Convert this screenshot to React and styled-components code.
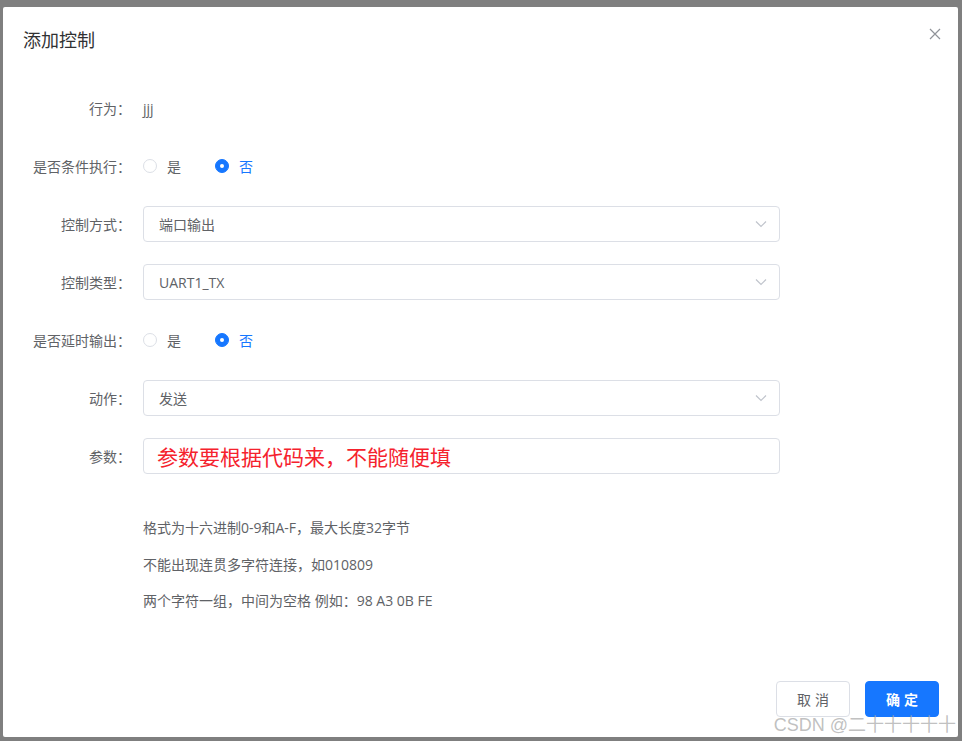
import React from 'react'
import styled, { createGlobalStyle } from 'styled-components'

const GlobalStyle = createGlobalStyle`
  * { box-sizing: border-box; }
  html, body { margin: 0; padding: 0; }
  body {
    font-family: "Open Sans", "Noto Sans CJK SC", sans-serif;
    background: #7f7f7f;
  }
`

const Page = styled.div`
  width: 962px;
  height: 741px;
  padding: 7px 4px 4px 3px;
  background: #7f7f7f;
  overflow: hidden;
`

const Dialog = styled.div`
  position: relative;
  width: 955px;
  height: 730px;
  background: #fff;
  border-radius: 2px;
  display: flex;
  flex-direction: column;
`

const Header = styled.div`
  display: flex;
  align-items: center;
  justify-content: space-between;
  padding: 20px 20px 10px;
`

const Title = styled.span`
  font-family: "Noto Sans CJK SC", sans-serif;
  font-size: 18px;
  line-height: 24px;
  color: #303133;
`

const Close = styled.button`
  border: none;
  background: none;
  padding: 0;
  margin-top: -10px;
  margin-right: -4px;
  cursor: pointer;
  display: flex;
`

const Body = styled.div`
  flex: 1;
  padding: 29px 20px 0;
`

const Row = styled.div`
  display: flex;
  align-items: center;
  height: 36px;
  margin-bottom: 22px;
`

const Label = styled.label`
  width: 120px;
  padding-right: 12px;
  text-align: right;
  font-size: 14px;
  color: #606266;
  white-space: nowrap;
`

const Field = styled.div`
  width: 637px;
  display: flex;
  align-items: center;
  font-size: 14px;
  color: #606266;
`

const Box = styled.div`
  width: 100%;
  height: 36px;
  border: 1px solid #dcdfe6;
  border-radius: 4px;
  display: flex;
  align-items: center;
  justify-content: space-between;
  padding: 0 11px 0 ${p => (p.$big ? '13px' : '15px')};
  font-family: ${p => (p.$big ? '"Noto Sans CJK SC", sans-serif' : 'inherit')};
  font-size: ${p => (p.$big ? '21px' : '14px')};
  color: ${p => (p.$big ? '#f5222d' : '#606266')};
`

const RadioItem = styled.label`
  display: flex;
  align-items: center;
  margin-right: 34px;
  font-size: 14px;
  color: ${p => (p.$checked ? '#1677ff' : '#606266')};
`

const Dot = styled.span`
  width: 14px;
  height: 14px;
  border-radius: 50%;
  margin-right: 10px;
  border: 1px solid ${p => (p.$checked ? '#1677ff' : '#dcdfe6')};
  background: ${p => (p.$checked ? '#1677ff' : '#fff')};
  display: flex;
  align-items: center;
  justify-content: center;
  &::after {
    content: '';
    width: 4px;
    height: 4px;
    border-radius: 50%;
    background: #fff;
    display: ${p => (p.$checked ? 'block' : 'none')};
  }
`

const Hints = styled.div`
  padding: 14px 0 0 120px;
`

const Hint = styled.p`
  margin: 0;
  font-size: 14px;
  line-height: 36.5px;
  color: #606266;
`

const Footer = styled.div`
  display: flex;
  justify-content: flex-end;
  gap: 15px;
  padding: 10px 19px 20px;
`

const Button = styled.button`
  width: 74px;
  height: 36px;
  border-radius: 4px;
  font-family: "Noto Sans CJK SC", sans-serif;
  font-size: 14px;
  letter-spacing: 4px;
  text-indent: 4px;
  border: 1px solid ${p => (p.$primary ? '#1677ff' : '#dcdfe6')};
  background: ${p => (p.$primary ? '#1677ff' : '#fff')};
  color: ${p => (p.$primary ? '#fff' : '#606266')};
  font-weight: ${p => (p.$primary ? 600 : 400)};
`

const Watermark = styled.span`
  position: absolute;
  right: 2px;
  bottom: 1px;
  font-family: "Liberation Sans", "Noto Sans CJK SC", sans-serif;
  font-size: 18px;
  color: rgba(165, 165, 165, 0.7);
  pointer-events: none;
`

const Chevron = () => (
  <svg width="14" height="14" viewBox="0 0 14 14" fill="none">
    <path d="M2 4.5 L7 9.5 L12 4.5" stroke="#c0c4cc" strokeWidth="1.2" />
  </svg>
)

const Select = ({ value }) => (
  <Box>
    {value}
    <Chevron />
  </Box>
)

const Radios = ({ checked }) => (
  <>
    <RadioItem $checked={checked === 'yes'}>
      <Dot $checked={checked === 'yes'} />是
    </RadioItem>
    <RadioItem $checked={checked === 'no'}>
      <Dot $checked={checked === 'no'} />否
    </RadioItem>
  </>
)

export default function App() {
  return (
    <>
      <GlobalStyle />
      <Page>
        <Dialog>
          <Header>
            <Title>添加控制</Title>
            <Close>
              <svg width="14" height="14" viewBox="0 0 14 14">
                <path d="M2 2 L12 12 M12 2 L2 12" stroke="#909399" strokeWidth="1.2" />
              </svg>
            </Close>
          </Header>
          <Body>
            <Row>
              <Label>行为：</Label>
              <Field>jjj</Field>
            </Row>
            <Row>
              <Label>是否条件执行：</Label>
              <Field><Radios checked="no" /></Field>
            </Row>
            <Row>
              <Label>控制方式：</Label>
              <Field><Select value="端口输出" /></Field>
            </Row>
            <Row>
              <Label>控制类型：</Label>
              <Field><Select value="UART1_TX" /></Field>
            </Row>
            <Row>
              <Label>是否延时输出：</Label>
              <Field><Radios checked="no" /></Field>
            </Row>
            <Row>
              <Label>动作：</Label>
              <Field><Select value="发送" /></Field>
            </Row>
            <Row>
              <Label>参数：</Label>
              <Field>
                <Box $big>参数要根据代码来，不能随便填</Box>
              </Field>
            </Row>
            <Hints>
              <Hint>格式为十六进制0-9和A-F，最大长度32字节</Hint>
              <Hint>不能出现连贯多字符连接，如010809</Hint>
              <Hint>两个字符一组，中间为空格 例如：98 A3 0B FE</Hint>
            </Hints>
          </Body>
          <Footer>
            <Button>取消</Button>
            <Button $primary>确定</Button>
          </Footer>
          <Watermark>CSDN @二十十十十十</Watermark>
        </Dialog>
      </Page>
    </>
  )
}
